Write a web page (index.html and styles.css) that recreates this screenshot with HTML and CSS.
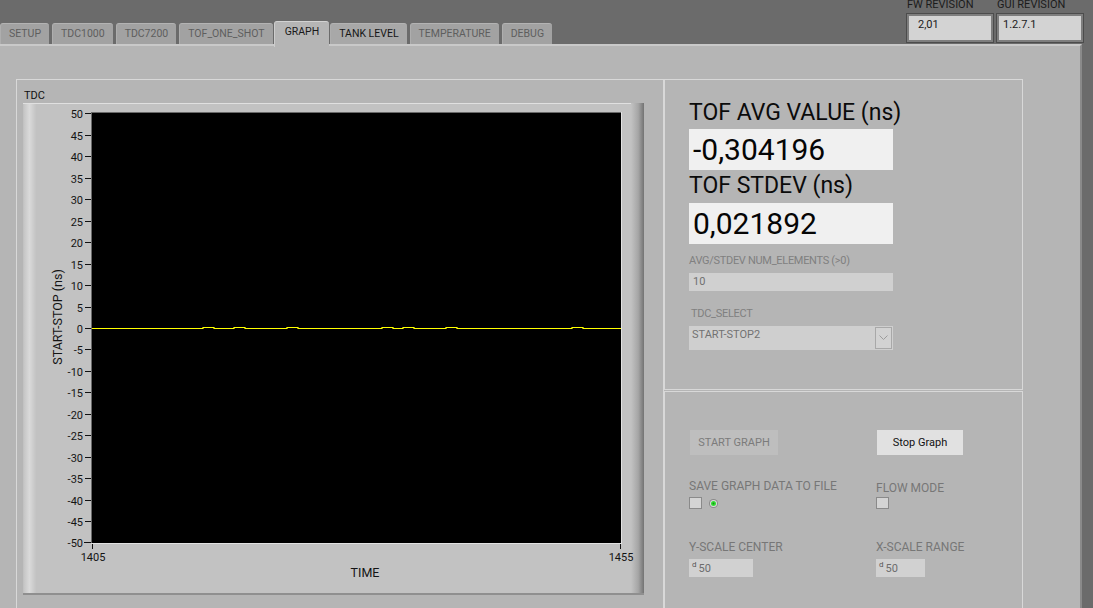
FILE: index.html
```html
<!DOCTYPE html>
<html lang="en">
<head>
  <meta charset="UTF-8">
  <title>TDC1000-TDC7200 EVM</title>
  <link rel="stylesheet" href="styles.css">
</head>
<body>
  <div class="topbar">
    <div class="tabs">
      <div class="tab">SETUP</div>
      <div class="tab">TDC1000</div>
      <div class="tab">TDC7200</div>
      <div class="tab">TOF_ONE_SHOT</div>
      <div class="tab active">GRAPH</div>
      <div class="tab hover">TANK LEVEL</div>
      <div class="tab">TEMPERATURE</div>
      <div class="tab">DEBUG</div>
    </div>
    <div class="revisions">
      <div class="rev">
        <div class="rev-label">FW REVISION</div>
        <div class="rev-box fw">2,01</div>
      </div>
      <div class="rev">
        <div class="rev-label">GUI REVISION</div>
        <div class="rev-box">1.2.7.1</div>
      </div>
    </div>
  </div>

  <div class="panel">
    <div class="group graph-group">
      <div class="graph-title">TDC</div>
      <svg class="graph" width="621" height="492" viewBox="0 0 621 492">
        <defs>
          <linearGradient id="edgeLeft" x1="0" x2="1" y1="0" y2="0">
            <stop offset="0" stop-color="#c6c6c6"/>
            <stop offset="0.45" stop-color="#dadada"/>
            <stop offset="1" stop-color="#c3c3c3"/>
          </linearGradient>
          <linearGradient id="edgeRight" x1="0" x2="1" y1="0" y2="0">
            <stop offset="0" stop-color="#c2c2c2"/>
            <stop offset="0.55" stop-color="#a6a6a6"/>
            <stop offset="1" stop-color="#737373"/>
          </linearGradient>
        </defs>
        <rect width="621" height="492" fill="#c2c2c2"/>
        <rect x="0" y="0" width="621" height="1" fill="#e0e0e0"/>
        <rect x="1" y="1" width="12" height="490" fill="url(#edgeLeft)"/>
        <rect x="608" y="0" width="13" height="492" fill="url(#edgeRight)"/>
        <rect x="0" y="490" width="621" height="2" fill="#8f8f8f"/>

        <rect x="68" y="9" width="531" height="432" fill="#000"/>
        <path d="M68.5 9V441M68 9.5H599" stroke="#6a6a6a" fill="none"/>
        <path d="M68 440.5H599M598.5 9V441" stroke="#e2e2e2" fill="none"/>

        <path class="trace" d="M69 225.5H180V224.5H191V225.5H211V224.5H222V225.5H264V224.5H275V225.5H359V224.5H370V225.5H380V224.5H391V225.5H423V224.5H434V225.5H549V224.5H560V225.5H598"/>

        <path class="ticks" d="M62 10.5h6M62 32.5h6M62 53.5h6M62 75.5h6M62 96.5h6M62 118.5h6M62 139.5h6M62 161.5h6M62 182.5h6M62 204.5h6M62 225.5h6M62 246.5h6M62 268.5h6M62 289.5h6M62 311.5h6M62 332.5h6M62 354.5h6M62 375.5h6M62 397.5h6M62 418.5h6M61 439.5h7M69.5 441v5M597.5 441v5"/>

        <g class="ylabels">
          <text x="60" y="14.5">50</text>
          <text x="60" y="36.5">45</text>
          <text x="60" y="57.5">40</text>
          <text x="60" y="79.5">35</text>
          <text x="60" y="100.5">30</text>
          <text x="60" y="122.5">25</text>
          <text x="60" y="143.5">20</text>
          <text x="60" y="165.5">15</text>
          <text x="60" y="186.5">10</text>
          <text x="60" y="208.5">5</text>
          <text x="60" y="229.5">0</text>
          <text x="60" y="250.5">-5</text>
          <text x="60" y="272.5">-10</text>
          <text x="60" y="293.5">-15</text>
          <text x="60" y="315.5">-20</text>
          <text x="60" y="336.5">-25</text>
          <text x="60" y="358.5">-30</text>
          <text x="60" y="379.5">-35</text>
          <text x="60" y="401.5">-40</text>
          <text x="60" y="422.5">-45</text>
          <text x="60" y="443.5">-50</text>
        </g>
        <g class="xlabels">
          <text x="70" y="458">1405</text>
          <text x="598" y="458">1455</text>
        </g>
        <text class="axis-name" x="342" y="474">TIME</text>
        <text class="axis-name" transform="translate(39 214) rotate(-90)">START-STOP (ns)</text>
      </svg>
    </div>

    <div class="side">
      <div class="group stats">
        <div class="big-label">TOF AVG VALUE (ns)</div>
        <div class="big-value">-0,304196</div>
        <div class="big-label">TOF STDEV (ns)</div>
        <div class="big-value">0,021892</div>

        <div class="small-label">AVG/STDEV NUM_ELEMENTS (&gt;0)</div>
        <div class="num-box">10</div>

        <div class="small-label tdc-label">TDC_SELECT</div>
        <div class="select">
          <span>START-STOP2</span>
          <span class="select-arrow">
            <svg width="9" height="6" viewBox="0 0 9 6"><polyline points="0.5,0.5 4.5,4.5 8.5,0.5" fill="none" stroke="#9c9c9c"/></svg>
          </span>
        </div>
      </div>

      <div class="group controls-group">
        <div class="controls">
          <button class="btn btn-start">START GRAPH</button>
          <button class="btn btn-stop">Stop Graph</button>

          <div class="field">
            <div class="field-label">SAVE GRAPH DATA TO FILE</div>
            <div class="check-row">
              <span class="checkbox"></span>
              <svg class="led" width="9" height="9" viewBox="0 0 9 9">
                <circle cx="4.5" cy="4.5" r="4.5" fill="#8a8a8a"/>
                <circle cx="4.5" cy="4.5" r="3.5" fill="#dcdcdc"/>
                <circle cx="4.5" cy="4.5" r="2.5" fill="#33e033"/>
                <circle cx="4.5" cy="4.5" r="1" fill="#1b8f1b"/>
              </svg>
            </div>
          </div>
          <div class="field flow">
            <div class="field-label">FLOW MODE</div>
            <div class="check-row">
              <span class="checkbox"></span>
            </div>
          </div>

          <div class="field scale">
            <div class="field-label">Y-SCALE CENTER</div>
            <div class="numeric"><span class="radix">d</span>50</div>
          </div>
          <div class="field scale">
            <div class="field-label">X-SCALE RANGE</div>
            <div class="numeric narrow"><span class="radix">d</span>50</div>
          </div>
        </div>
      </div>
    </div>
  </div>
</body>
</html>
```

FILE: styles.css
```css
body {
  margin: 0;
  width: 1093px;
  height: 608px;
  overflow: hidden;
  background: #6b6b6b;
  font-family: Roboto, "Liberation Sans", sans-serif;
  font-size: 11px;
  color: #111;
}

/* top strip: tabs + revisions */
.topbar {
  display: flex;
  height: 44px;
}
.tabs {
  display: flex;
  align-items: flex-end;
  gap: 3px;
}
.tab {
  position: relative;
  height: 21px;
  box-sizing: border-box;
  padding: 0 8px;
  font-size: 10.5px;
  line-height: 19px;
  color: #5e5e5e;
  background: #a2a2a2;
  border-top: 1px solid #b3b3b3;
  border-left: 1px solid #aeaeae;
  border-radius: 3px 3px 0 0;
  white-space: nowrap;
}
.tab.hover {
  color: #161616;
  background: #a8a8a8;
}
.tab.active {
  z-index: 2;
  height: 26px;
  margin: 0 -2px -3px;
  padding: 0 10px;
  color: #1a1a1a;
  background: #b5b5b5;
  border-top: 1px solid #d2d2d2;
  border-left: 1px solid #cdcdcd;
}

.revisions {
  display: flex;
  gap: 2px;
  margin-left: auto;
  padding-right: 9px;
}
.rev {
  width: 88px;
}
.rev-label {
  margin-top: -1px;
  padding-left: 1px;
  line-height: 11px;
  color: #1b1b1b;
}
.rev-box {
  margin-top: 3px;
  height: 30px;
  box-sizing: border-box;
  padding: 3px 0 0 6px;
  line-height: 16px;
  background: #d3d3d3;
  border: 1px solid #4c4c4c;
  box-shadow: inset 0 0 0 2px #7e7e7e;
  color: #1a1a1a;
}
.rev-box.fw {
  padding-left: 11px;
}

/* main tab page */
.panel {
  display: flex;
  width: 1082px;
  height: 564px;
  box-sizing: border-box;
  padding: 33px 0 0 16px;
  background: #b5b5b5;
  border-top: 2px solid #c9c9c9;
  border-right: 2px solid #8a8a8a;
}
.group {
  box-sizing: border-box;
  border: 1px solid #d8d8d8;
}

.graph-group {
  width: 648px;
  height: 529px;
  padding: 9px 0 0 6px;
  border-bottom: none;
}
.graph-title {
  padding-left: 1px;
  margin-bottom: 1px;
  line-height: 13px;
}
.graph {
  display: block;
}
.graph .trace {
  fill: none;
  stroke: #ffff00;
  stroke-width: 1.2;
}
.graph .ticks {
  fill: none;
  stroke: #111;
}
.graph text {
  font-family: Roboto, "Liberation Sans", sans-serif;
  font-size: 11px;
  fill: #141414;
}
.graph .ylabels text {
  text-anchor: end;
}
.graph .xlabels text,
.graph .axis-name {
  text-anchor: middle;
}
.graph .axis-name {
  font-size: 12.5px;
}

.side {
  display: flex;
  flex-direction: column;
  width: 359px;
  height: 529px;
}
.stats {
  height: 311px;
  padding: 20px 0 0 24px;
}
.big-label {
  margin-bottom: 3px;
  font-size: 23px;
  line-height: 26px;
  color: #0b0b0b;
}
.big-value + .big-label {
  margin-top: 3px;
  margin-bottom: 4px;
}
.big-value {
  width: 204px;
  height: 41px;
  box-sizing: border-box;
  padding-left: 4px;
  background: #f0f0f0;
  font-size: 30px;
  line-height: 41px;
  color: #050505;
}
.small-label {
  margin: 10px 0 6px;
  line-height: 13px;
  color: #808080;
  letter-spacing: -0.3px;
}
.tdc-label {
  margin-top: 16px;
  padding-left: 2px;
}
.num-box {
  width: 204px;
  height: 18px;
  box-sizing: border-box;
  padding-left: 4px;
  line-height: 18px;
  background: #d0d0d0;
  color: #707070;
}
.select {
  display: flex;
  width: 204px;
  height: 24px;
  box-sizing: border-box;
  padding-left: 3px;
  line-height: 18px;
  background: #cfcfcf;
  color: #727272;
}
.select-arrow {
  display: flex;
  align-items: center;
  justify-content: center;
  width: 17px;
  height: 22px;
  box-sizing: border-box;
  margin: 1px 1px 0 auto;
  border: 1px solid #a8a8a8;
  background: #d2d2d2;
}

.controls-group {
  flex: 1;
  margin-top: 1px;
  padding: 38px 0 0 24px;
  border-bottom: none;
}
.controls {
  display: grid;
  grid-template-columns: 187px 1fr;
  align-items: start;
}
.btn {
  justify-self: start;
  height: 25px;
  margin-left: 1px;
  padding: 0;
  border: none;
  font-family: Roboto, "Liberation Sans", sans-serif;
  font-size: 11px;
}
.btn-start {
  width: 88px;
  background: #bebebe;
  color: #7b7b7b;
}
.btn-stop {
  width: 86px;
  background: #e1e1e1;
  color: #111;
}
.field {
  margin-top: 24px;
}
.field.scale {
  margin-top: 31px;
}
.field-label {
  font-size: 12px;
  line-height: 14px;
  color: #777;
  white-space: nowrap;
}
.flow .field-label {
  padding-top: 2px;
}
.check-row {
  display: flex;
  align-items: center;
  gap: 7px;
  margin-top: 4px;
}
.flow .check-row {
  margin-top: 2px;
}
.checkbox {
  width: 13px;
  height: 12px;
  box-sizing: border-box;
  border: 1px solid #8a8a8a;
  background: #d4d4d4;
}
.numeric {
  display: flex;
  align-items: center;
  width: 64px;
  height: 18px;
  box-sizing: border-box;
  margin-top: 5px;
  padding-left: 3px;
  background: #d1d1d1;
  color: #6c6c6c;
}
.numeric.narrow {
  width: 49px;
}
.radix {
  align-self: flex-start;
  margin: 2px 2px 0 0;
  font-size: 8px;
  line-height: 8px;
  color: #555;
}
```
